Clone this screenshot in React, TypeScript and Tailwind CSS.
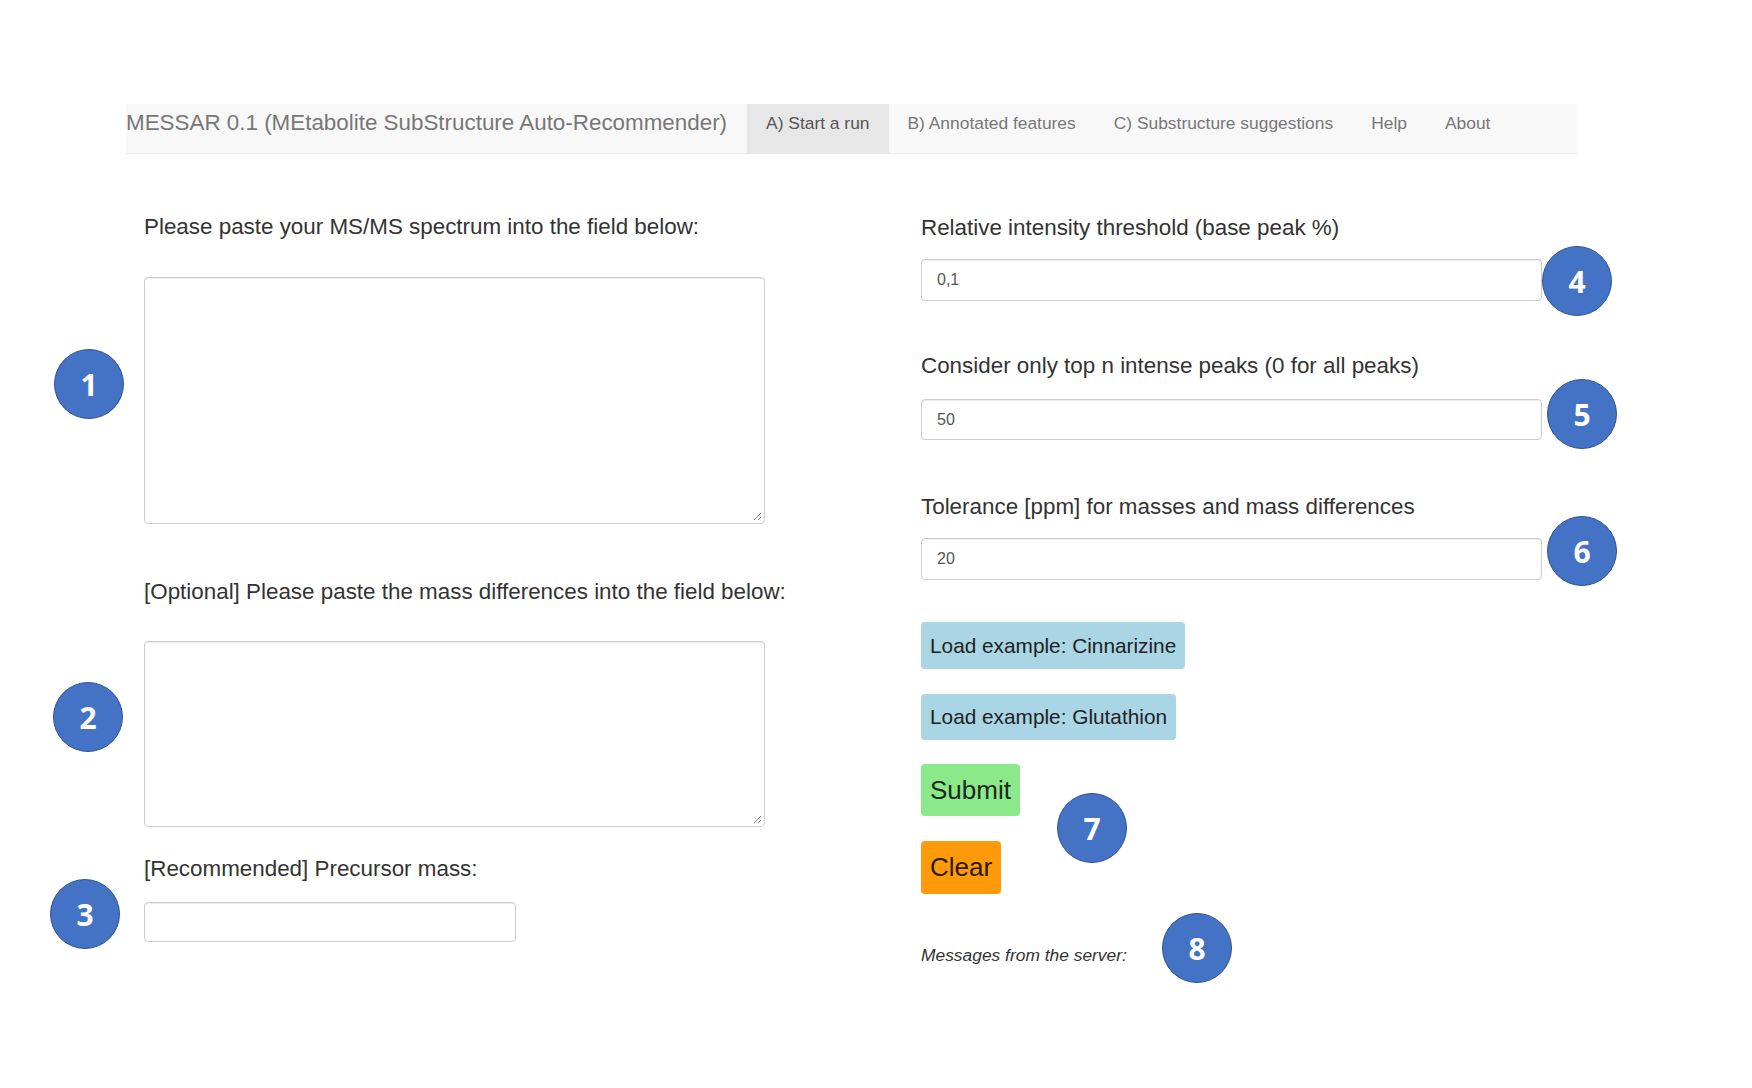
import React from "react";

const tabs = [
  { label: "A) Start a run", active: true },
  { label: "B) Annotated features" },
  { label: "C) Substructure suggestions" },
  { label: "Help" },
  { label: "About" },
];

const marks = [
  { n: "1", cls: "left-[54px] top-[349px]" },
  { n: "2", cls: "left-[53px] top-[682px]" },
  { n: "3", cls: "left-[50px] top-[879px]" },
  { n: "4", cls: "left-[1542px] top-[246px]" },
  { n: "5", cls: "left-[1547px] top-[379px]" },
  { n: "6", cls: "left-[1547px] top-[516px]" },
  { n: "7", cls: "left-[1057px] top-[793px]" },
  { n: "8", cls: "left-[1162px] top-[913px]" },
];

function Label({ children, className = "" }: { children: React.ReactNode; className?: string }) {
  return (
    <div className={"h-[24px] text-[22.4px] leading-[24px] text-[#333] whitespace-nowrap " + className}>
      {children}
    </div>
  );
}

function TextInput({ value, className = "" }: { value?: string; className?: string }) {
  return (
    <div
      className={
        "flex items-center rounded-[4px] border border-[#ccc] bg-white pl-[15px] text-[16px] text-[#555] shadow-[inset_0_1px_1px_rgba(0,0,0,0.075)] " +
        className
      }
    >
      {value}
    </div>
  );
}

function TextArea({ className = "" }: { className?: string }) {
  return (
    <div
      className={
        "relative rounded-[4px] border border-[#ccc] bg-white shadow-[inset_0_1px_1px_rgba(0,0,0,0.075)] " + className
      }
    >
      <svg className="absolute right-[2px] bottom-[2px]" width="9" height="9" viewBox="0 0 9 9">
        <path d="M8 1L1 8M8 5L5 8" stroke="#888" strokeWidth="1" />
      </svg>
    </div>
  );
}

export default function App() {
  return (
    <div className="relative h-[1088px] w-[1752px] bg-white font-['Liberation_Sans',Arial,sans-serif]">
      <div className="pt-[104px] pl-[126px]">
        <nav className="flex h-[50px] w-[1451px] items-stretch border-b border-[#e7e7e7] bg-[#f8f8f8]">
          <div className="pt-[7px] pr-[20px] text-[22.4px] leading-[24px] text-[#777]">
            MESSAR 0.1 (MEtabolite SubStructure Auto-Recommender)
          </div>
          {tabs.map((t) => (
            <div
              key={t.label}
              className={
                "px-[19px] pt-[7px] text-[17.4px] leading-[24px] " +
                (t.active ? "bg-[#e7e7e7] text-[#555]" : "text-[#777]")
              }
            >
              {t.label}
            </div>
          ))}
        </nav>

        <div className="flex">
          <div className="w-[777px] pl-[18px]">
            <Label className="mt-[61px]">Please paste your MS/MS spectrum into the field below:</Label>
            <TextArea className="mt-[38px] h-[247px] w-[621px]" />
            <Label className="mt-[56px]">[Optional] Please paste the mass differences into the field below:</Label>
            <TextArea className="mt-[37px] h-[186px] w-[621px]" />
            <Label className="mt-[30px]">[Recommended] Precursor mass:</Label>
            <TextInput className="mt-[21px] h-[40px] w-[372px]" />
          </div>

          <div className="pl-[18px]">
            <Label className="mt-[62px]">Relative intensity threshold (base peak %)</Label>
            <TextInput value="0,1" className="mt-[19px] h-[42px] w-[621px]" />
            <Label className="mt-[53px]">Consider only top n intense peaks (0 for all peaks)</Label>
            <TextInput value="50" className="mt-[21px] h-[41px] w-[621px]" />
            <Label className="mt-[55px]">Tolerance [ppm] for masses and mass differences</Label>
            <TextInput value="20" className="mt-[19px] h-[42px] w-[621px]" />

            <div className="mt-[42px] flex flex-col items-start">
              <button className="h-[47px] rounded-[4px] bg-[#a9d5e4] px-[9px] text-[20.8px] text-[#222]">
                Load example: Cinnarizine
              </button>
              <button className="mt-[25px] h-[46px] rounded-[4px] bg-[#a9d5e4] px-[9px] text-[20.8px] text-[#222]">
                Load example: Glutathion
              </button>
              <button className="mt-[24px] h-[52px] rounded-[4px] bg-[#8be98a] px-[9px] text-[26px] text-[#1d2a1d]">
                Submit
              </button>
              <button className="mt-[25px] h-[53px] rounded-[4px] bg-[#ff9a0a] px-[9px] text-[26px] text-[#2a1a00]">
                Clear
              </button>
            </div>
            <div className="mt-[48px] text-[17.4px] italic text-[#333]">Messages from the server:</div>
          </div>
        </div>
      </div>

      {marks.map((m) => (
        <div
          key={m.n}
          className={
            "absolute flex h-[70px] w-[70px] items-center justify-center rounded-full border-[1.5px] border-[#2f528f] bg-[#4472c4] font-['Open_Sans',sans-serif] text-[30px] font-bold text-white " +
            m.cls
          }
        >
          {m.n}
        </div>
      ))}
    </div>
  );
}
